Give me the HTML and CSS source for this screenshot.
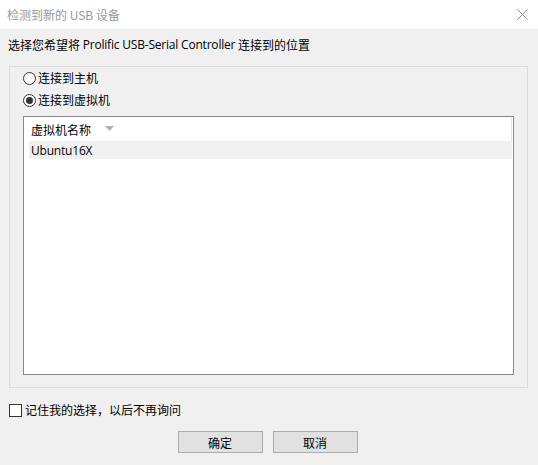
FILE: index.html
```html
<!DOCTYPE html>
<html lang="zh-CN">
<head>
    <meta charset="UTF-8">
    <title>检测到新的 USB 设备</title>
    <link rel="stylesheet" href="styles.css">
</head>
<body>
    <div class="dialog">
        <div class="titlebar">
            <span class="title">检测到新的 USB 设备</span>
            <svg class="close" width="11" height="11" viewBox="0 0 11 11">
                <path d="M0.5 0.5 L10.5 10.5 M10.5 0.5 L0.5 10.5" stroke="#8a8a8a" stroke-width="1" fill="none"/>
            </svg>
        </div>

        <p class="prompt">选择您希望将 <span class="latin">Prolific USB-Serial Controller</span> 连接到的位置</p>

        <div class="group">
            <label class="radio-row">
                <span class="radio"></span>
                <span>连接到主机</span>
            </label>
            <label class="radio-row">
                <span class="radio checked"></span>
                <span>连接到虚拟机</span>
            </label>

            <div class="list">
                <div class="list-header">
                    <span>虚拟机名称</span>
                    <svg class="sort" width="9" height="5" viewBox="0 0 9 5">
                        <path d="M0 0 L9 0 L4.5 5 Z" fill="#b4b4b4"/>
                    </svg>
                </div>
                <div class="list-row selected"><span class="latin">Ubuntu16X</span></div>
            </div>
        </div>

        <label class="check-row">
            <span class="checkbox"></span>
            <span>记住我的选择，以后不再询问</span>
        </label>

        <div class="buttons">
            <button class="btn">确定</button>
            <button class="btn">取消</button>
        </div>
    </div>
</body>
</html>
```

FILE: styles.css
```css
* {
    margin: 0;
    padding: 0;
    box-sizing: border-box;
}

body {
    font-family: "Noto Sans CJK SC", "Noto Sans", sans-serif;
    font-size: 12px;
    color: #000;
    background: #f0f0f0;
}

.dialog {
    width: 538px;
    height: 465px;
    background: #f0f0f0;
}

.titlebar {
    height: 29px;
    background: #fff;
    display: flex;
    align-items: center;
    justify-content: space-between;
    padding: 0 10px 0 7px;
}

.title {
    color: #999;
    font-size: 12px;
    line-height: 16px;
}

.close {
    display: block;
    margin-top: -1px;
}

.latin {
    font-family: "Open Sans", "Noto Sans", sans-serif;
    font-size: 12px;
    letter-spacing: -0.2px;
}

.prompt {
    height: 16px;
    line-height: 16px;
    margin: 8px 0 0 8px;
    display: flex;
    align-items: center;
    white-space: pre;
}

.group {
    margin: 13px 10px 0 9px;
    height: 322px;
    border: 1px solid #dcdcdc;
    padding: 0 13px 12px 13px;
    display: flex;
    flex-direction: column;
}

.radio-row {
    display: flex;
    align-items: center;
    height: 22px;
    line-height: 16px;
}

.radio {
    width: 13px;
    height: 13px;
    border: 1px solid #333;
    border-radius: 50%;
    background: #fff;
    margin-right: 2px;
    display: flex;
    align-items: center;
    justify-content: center;
}

.radio.checked::after {
    content: "";
    width: 7px;
    height: 7px;
    border-radius: 50%;
    background: #333;
}

.list {
    margin-top: 5px;
    flex: 1;
    background: #fff;
    border: 1px solid #828790;
    padding-left: 5px;
}

.list-header {
    height: 24px;
    display: flex;
    align-items: center;
    padding-left: 2px;
    border-right: 1px solid #e5e5e5;
    margin-right: 1px;
}

.sort {
    margin-left: 14px;
    margin-top: -1px;
}

.list-row {
    height: 18px;
    display: flex;
    align-items: center;
    padding-left: 2px;
    margin-right: 1px;
}

.list-row.selected {
    background: #f0f0f0;
}

.check-row {
    display: flex;
    align-items: center;
    margin: 15px 0 0 9px;
    height: 14px;
    line-height: 16px;
}

.checkbox {
    width: 13px;
    height: 13px;
    border: 1px solid #333;
    background: #fff;
    margin-right: 3px;
}

.buttons {
    display: flex;
    justify-content: center;
    gap: 10px;
    margin-top: 14px;
    padding-right: 3px;
}

.btn {
    width: 85px;
    height: 22px;
    background: #e1e1e1;
    border: 1px solid #adadad;
    font-family: "Noto Sans CJK SC", sans-serif;
    font-size: 12px;
    color: #000;
}
```
